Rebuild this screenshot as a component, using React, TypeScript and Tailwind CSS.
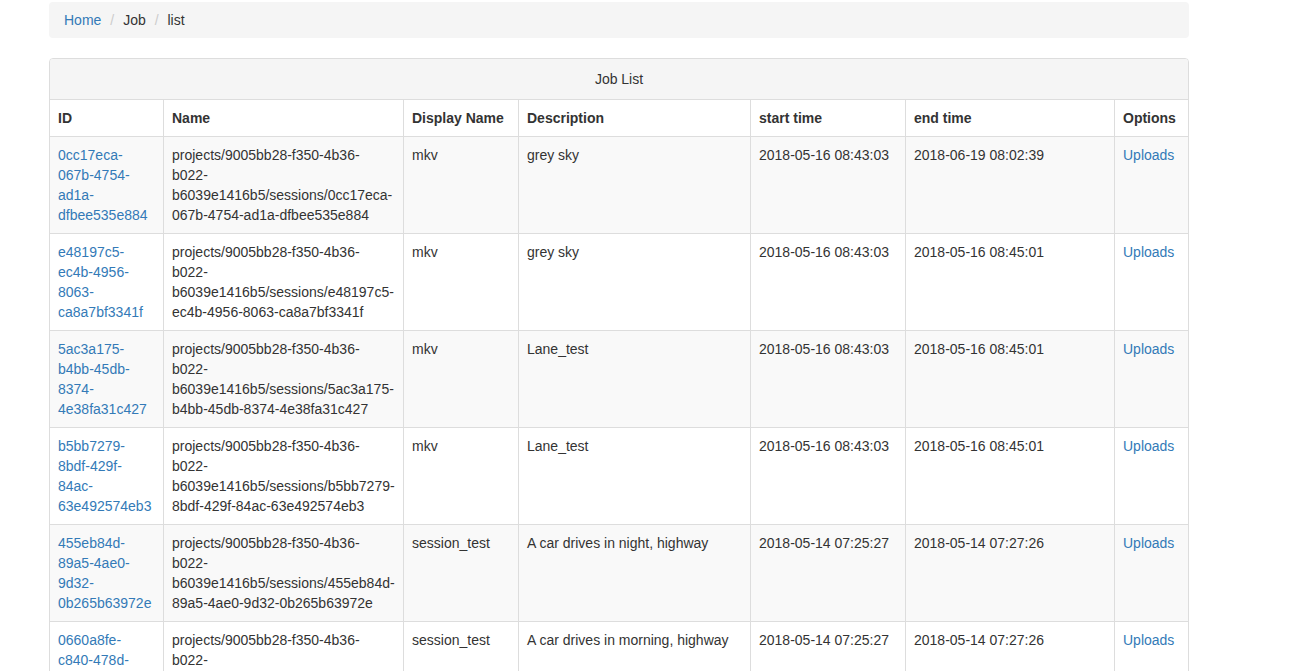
import React from "react";

const jobs = [
  {
    id: "0cc17eca-067b-4754-ad1a-dfbee535e884",
    display: "mkv",
    desc: "grey sky",
    start: "2018-05-16 08:43:03",
    end: "2018-06-19 08:02:39",
  },
  {
    id: "e48197c5-ec4b-4956-8063-ca8a7bf3341f",
    display: "mkv",
    desc: "grey sky",
    start: "2018-05-16 08:43:03",
    end: "2018-05-16 08:45:01",
  },
  {
    id: "5ac3a175-b4bb-45db-8374-4e38fa31c427",
    display: "mkv",
    desc: "Lane_test",
    start: "2018-05-16 08:43:03",
    end: "2018-05-16 08:45:01",
  },
  {
    id: "b5bb7279-8bdf-429f-84ac-63e492574eb3",
    display: "mkv",
    desc: "Lane_test",
    start: "2018-05-16 08:43:03",
    end: "2018-05-16 08:45:01",
  },
  {
    id: "455eb84d-89a5-4ae0-9d32-0b265b63972e",
    display: "session_test",
    desc: "A car drives in night, highway",
    start: "2018-05-14 07:25:27",
    end: "2018-05-14 07:27:26",
  },
  {
    id: "0660a8fe-c840-478d-b6a1-2f0e3c7d9a41",
    display: "session_test",
    desc: "A car drives in morning, highway",
    start: "2018-05-14 07:25:27",
    end: "2018-05-14 07:27:26",
  },
];

const th = "p-2 text-left font-bold align-top border-r border-b border-[#ddd]";
const td = "p-2 align-top border-r border-b border-[#ddd]";

const App = () => {
  return (
    <main
      className="min-h-screen bg-white text-[14px] leading-[20px] text-[#333]"
      style={{ fontFamily: '"Liberation Sans", Arial, sans-serif' }}
    >
      <div className="ml-[49px] w-[1140px] pt-[2px]">
        {/* breadcrumb */}
        <ol className="flex gap-1 rounded bg-[#f5f5f5] px-[15px] py-2 mb-5">
          <li>
            <a className="text-[#337ab7]" href="#">Home</a>
          </li>
          <li>
            <span className="px-[5px] text-[#ccc]">/&nbsp;</span>Job
          </li>
          <li>
            <span className="px-[5px] text-[#ccc]">/&nbsp;</span>list
          </li>
        </ol>

        {/* panel */}
        <div className="rounded border border-[#ddd] overflow-hidden">
          <div className="bg-[#f5f5f5] px-[15px] py-[10px] text-center border-b border-[#ddd]">
            Job List
          </div>
          <table className="table-fixed w-[1138px] border-separate border-spacing-0">
            <thead>
              <tr>
                <th className={`${th} w-[114px]`}>ID</th>
                <th className={`${th} w-[240px]`}>Name</th>
                <th className={`${th} w-[115px]`}>Display Name</th>
                <th className={`${th} w-[232px]`}>Description</th>
                <th className={`${th} w-[155px]`}>start time</th>
                <th className={`${th} w-[209px]`}>end time</th>
                <th className={`${th} w-[73px] border-r-0`}>Options</th>
              </tr>
            </thead>
            <tbody>
              {jobs.map((job, i) => (
                <tr key={job.id} className={i % 2 === 0 ? "bg-[#f9f9f9]" : "bg-white"}>
                  <td className={td}>
                    <a className="text-[#337ab7]" href="#">{job.id}</a>
                  </td>
                  <td className={td}>
                    projects/9005bb28-f350-4b36-b022-b6039e1416b5/sessions/{job.id}
                  </td>
                  <td className={td}>{job.display}</td>
                  <td className={td}>{job.desc}</td>
                  <td className={td}>{job.start}</td>
                  <td className={td}>{job.end}</td>
                  <td className={`${td} border-r-0`}>
                    <a className="text-[#337ab7]" href="#">Uploads</a>
                  </td>
                </tr>
              ))}
            </tbody>
          </table>
        </div>
      </div>
    </main>
  );
};

export default App;
